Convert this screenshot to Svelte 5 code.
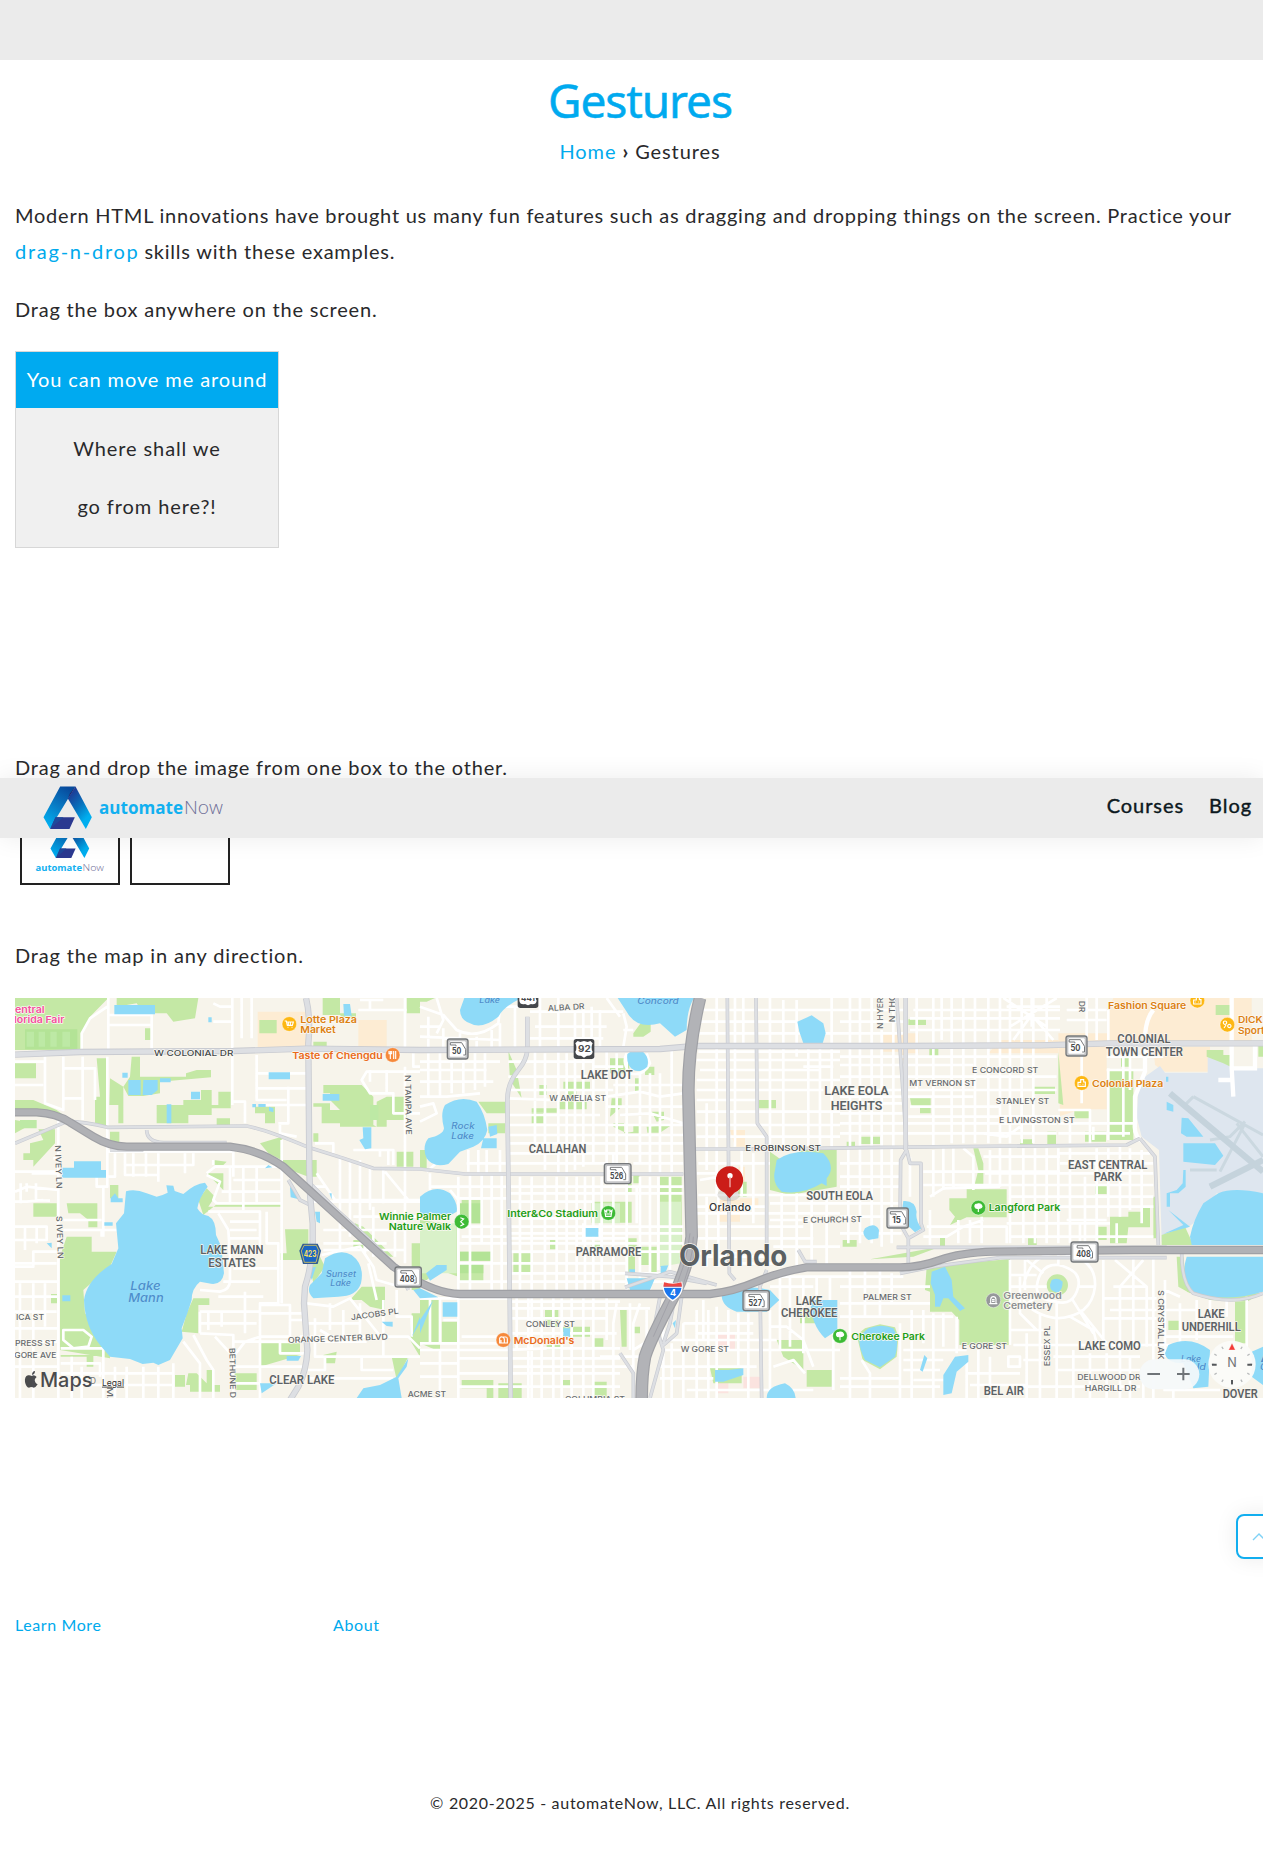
<script>
  // Map geometry is stored in three side-by-side tiles, each 1260 units wide.
  const T = [0, 1260, 2520];

  const commercial = [
    'M773 65H918V172H773ZM1075 90H1160V172H1075Z',
    'M930 420H975V470H945ZM960 625H1015V655H960ZM895 630H960V695H895ZM955 530H975V575H955Z',
    'M130 130H235V190H200V210H180V185H130ZM480 150H655V190H445ZM655 130H805V60L820 24H1235V160H800V358H725L660 378ZM940 170H1110V245H975L945 225Z'
  ];

  const pink = ['', 'M893 1028H945V1080H893ZM890 1170H925V1210H890ZM970 1160H1025V1195H970Z', ''];

  const airport = [
    '', '',
    'M915 260L960 228L975 248H1103V195H1180V235H1269V610L1130 610L1060 700L1040 715L965 755L957 480L905 440L890 380L895 300Z'
  ];

  const runways = 'M990 310L1269 545M1110 590L1269 510M1060 320L1269 435M1030 350L1060 320M1110 450L1170 440L1215 395M1140 545L1215 400M1190 400L1269 500M1050 540H1130';

  const greens = [
    'M45 24H325L270 80L245 130V180H45ZM350 50V24H595L585 85L520 95L500 70H430L410 40ZM435 115H452V150H435ZM968 24H1020V70H1068V85H1030L1020 75H968ZM778 90H830V130H778ZM940 155H980V170H940Z',
    'M45 220H108V265H45ZM395 200H420V260H558V250L590 240H633V262L480 275V310L430 318H385L370 290L390 260ZM45 330H100L170 360L290 450L240 420L165 385L45 370ZM45 390L100 400L45 430ZM290 205H318V408H285V320H300ZM330 265L370 290V400H355V345H328Z',
    'M470 345H550V330H603V300H635V345H655V305H692V355H635V375H565V400H470ZM765 350H825V400H795V370H765ZM650 385H690V405H650ZM940 350H965V400H1110L1130 410V335L1160 320H1220V390H1160V410H1020V360H990V340H940ZM970 285H1085L1120 320V405H1020V360L990 330V310H970Z',
    'M115 418H165V460L100 530V510H70V490H90V460L130 450ZM330 425H358V460H330ZM780 460L845 440V510L805 490ZM940 430H955V455H940ZM800 510L950 510V560H925L870 540ZM1190 485H1240V530H1190Z',
    'M100 640H170V680H100ZM200 640H292V712H265V690L240 670H205ZM330 585H355V625H330ZM595 630L620 595L645 620L625 650H845V643H650L610 675ZM640 510L680 515L670 525H640ZM620 550H670V600Z',
    'M200 740H275V785H350L330 830L250 900L255 970L330 1060V1105L180 1080V800ZM580 925H628V945H595V1030L545 1025L560 970ZM153 912H172V940H153ZM182 1095H280V1130H260V1100H182ZM855 718H925V810H840V790H860ZM930 830L960 800L975 830L940 880ZM1085 890H1155V960L1110 950L1085 930Z',
    'M565 1150H590L620 1180V1140H640V1185H660V1205H570V1185H558ZM780 1060H900V1095L780 1130ZM700 1150H770V1200H705ZM525 1155H555V1190H525ZM970 1095L1010 1085L1005 1120H975ZM1175 1100H1225L1190 1170ZM1220 24H1260V70H1220Z',
    'M1065 700L1090 710L1180 800H1170L1060 720ZM1060 750H1090V775H1060ZM1085 930V890L1050 930ZM1235 760H1260V900H1235ZM1235 970H1260V1100L1230 1050Z'
  ].join('');

  const greens2 = [
    'M0 24H45L20 35H0ZM640 130L665 95H692V125L670 140H640ZM265 183L290 240L305 325L270 270ZM570 205H628V250H570ZM675 230H703V255H675ZM175 335H258V370H200ZM205 400H255V430H205ZM430 275H510V300H430ZM358 285H380V315H358ZM335 355H410V368H335ZM415 335H500V358H415ZM335 370H370V400H335ZM440 300H470V335H440ZM575 325H605V350L570 380ZM695 365H732V390L710 395ZM680 410L755 405L720 428H682ZM580 400H612V430L640 425V405H660V430H620L580 410ZM645 265H660V305H645Z',
    'M1050 485L1085 510L1150 480H1250V590L1110 615L1050 600ZM1015 330H1068V355H1015ZM955 575H980V620H955ZM125 630H187V700H125ZM0 690L70 700L115 710V860L60 840L20 870H0ZM120 785H213V812H120ZM120 822H190V875H120ZM515 635H635V698H515ZM620 560H635V610H620ZM640 555H658V580H640ZM515 755H540V790H515ZM390 750H412V778H390ZM280 790H335V850H280ZM625 745H650V780H625ZM625 795H645V850H625ZM660 770H710V850H688V825H660ZM720 560H785V810L720 830Z',
    'M0 930L60 930V1085L0 1060ZM65 995H115V1060H65ZM375 960H415V1010H375ZM425 1010H510V1040H425ZM520 1045H550V1070H520ZM600 960H620V1070H605ZM640 1010H660V1030H640ZM380 1065H425V1080H380ZM125 1170H220V1224H200V1195H125ZM235 1180H305V1224H235ZM520 1175H560V1224H520ZM425 1170H450V1190H425ZM870 1135H965V1180H880ZM1070 1050H1150V1140L1090 1100ZM1160 1140H1235V1190H1160ZM1140 960H1250V1000H1140ZM0 480H20V540H0Z'
  ].join('');

  const greens3 = [
    'M205 88H258V105H205ZM268 175H295V200H268ZM210 325H272V370H240V350H215ZM655 185L670 345L655 340ZM1100 180H1150V195H1175V232L1150 220L1100 200ZM1255 165H1269V200H1255ZM580 290H645V312H580ZM60 440H120V462H60ZM540 448H578V465H540ZM622 425H648V462H622ZM735 425H798V455H735ZM703 362H750V385H703ZM805 240H880V450H805ZM843 205H870V230H843ZM20 455H45V470H20ZM765 583H800V612H765Z',
    'M400 475H415L430 520V590H405V580L415 540ZM380 598H500V682H380L330 705L345 680L328 660V625H380ZM300 740H315V770H300ZM564 745H590V765H564ZM8 750H50V770H8ZM905 652H930V712H865L860 760H810V680H865V665H905ZM775 710H800V750H775ZM940 620H948V745H940ZM965 735L1035 710L1060 765H965ZM90 808L300 770L220 800Z',
    'M260 830L500 808H510V1065H358V990L335 965H270V905L255 900ZM1010 800H1030L1040 880L1050 910L1015 890ZM985 992H1018V1020H985ZM1185 935H1220V1060H1185ZM1127 45H1175V75H1127ZM1040 905L1269 910L1220 935L1110 930ZM50 1035L75 1015L120 1003L165 1012L175 1040L170 1100L120 1138L68 1110ZM620 885A32 32 0 1 1 684 885A32 32 0 1 1 620 885Z'
  ].join('');

  const greenTiles = [greens, greens2, greens3];

  const softGreen = [
    'M75 118H232V178H75Z',
    'M0 700H110V850H0ZM720 635H783V820L720 830ZM515 640H600V700H515Z',
    ''
  ];

  const fields = 'M80 125H102V170H80ZM116 125H135V170H116ZM151 125H170V170H151ZM187 125H210V170H187ZM60 390H110V415H60ZM1110 345H1135V390H1110Z';

  const water = [
    'M378 604Q405 595 440 610L470 620Q490 615 503 608L499 586L520 587L524 603L550 612Q585 580 615 578L623 590Q596 625 592 655Q603 675 625 678Q648 690 648 735L664 770L672 850Q665 890 625 880L600 875Q575 895 575 930L562 970L545 1015L548 1045L510 1110L475 1125L460 1118L428 1122L390 1107L330 1100L300 1065Q255 1010 252 930Q260 870 335 822L355 775L348 700L372 670ZM343 45H465V73H343ZM222 514H303V540H318V563H186V533H222ZM385 270H422V315H385ZM430 270H473V300L455 315H428ZM367 248H383V263H367ZM480 265H512V277H480ZM573 305H600V328H573ZM500 343H514V400H500ZM806 247H870V268H806ZM968 312H1018V332H968ZM1030 42L1050 42L1055 77H1032ZM1088 412H1114V475L1095 478L1078 450L1090 445ZM625 82H635V97H625ZM345 610L355 625H368V637H332V625ZM313 697H338V707H313ZM187 916H211V934H187ZM945 665H960V700L950 695ZM870 590L905 630L872 622ZM988 610H995V628ZM757 342H768V352H757ZM775 342H797V351H775ZM807 350L820 355V367L807 363ZM795 535L805 525L817 532ZM140 760L155 758V775Z',
    'M975 805Q1020 775 1055 795Q1095 825 1083 880Q1070 920 1015 920L940 925Q920 905 930 885L965 850ZM925 835L948 830L935 870ZM780 1180H830L785 1210ZM860 1098H903L895 1112H860ZM1145 995H1178V1010L1160 1008ZM1070 1224L1090 1195L1140 1185L1190 1160L1225 1105L1220 1130L1195 1165L1205 1224ZM1235 1040L1260 980V1000ZM1240 900L1260 895V925Z'
  ].join('');

  const water2 = [
    'M133 24H305Q250 50 235 80Q185 120 150 100Q120 90 120 60ZM593 24H822Q800 60 800 120L765 140L720 100Q650 120 620 65ZM622 192Q640 178 665 182Q690 200 682 230Q660 250 640 240Q618 225 622 192ZM1132 95L1175 76L1210 100L1217 130L1208 160H1150L1138 125ZM75 345Q120 315 170 335Q195 370 202 420Q195 455 160 470L120 485L85 522Q40 535 20 505Q5 470 25 445Q70 435 72 415Q60 370 75 345ZM205 410L230 405L232 432L210 440ZM190 445H230V475H183ZM0 620Q45 580 90 610Q115 640 110 665Q70 690 45 675L0 675ZM497 714H535V740H497ZM18 850L50 825H80V840L30 872ZM0 895L55 922L0 925ZM68 937H112V980H68ZM628 838H645V848H628ZM620 865L705 865L690 900H630ZM722 828L745 826L735 852H722ZM905 915Q960 880 1050 900L1078 930L1040 965L950 965Q905 950 905 915ZM1070 510Q1120 475 1210 490Q1250 530 1220 565V588L1205 580Q1150 615 1085 605Q1055 580 1065 540ZM1172 930H1252V1020L1215 1045Q1170 1000 1172 930ZM885 1140L925 1140L970 1135V1155L910 1175H885ZM1040 1224Q1040 1190 1095 1180Q1125 1195 1127 1224ZM758 1000L768 990L765 1015ZM430 1015H450V1040H430ZM0 990L40 930L0 1030Z'
  ].join('');

  const water3 = [
    'M1135 610Q1180 590 1269 610V765H1055L1050 740Q1060 690 1090 640ZM1040 800H1269V905Q1150 940 1060 905Q1020 860 1040 800ZM1025 383L1045 385L1090 440L1040 440L1023 430ZM1030 460H1125L1150 497L1125 525L1030 515ZM980 335L1000 345V365L980 360ZM978 260H985V275H978ZM1030 540H1037V590L1015 610H990V650H980V610L1010 600L1028 580ZM985 660L1050 710L970 732L1030 705ZM190 633Q225 630 230 665Q225 690 245 715L225 727Q200 700 180 700ZM75 715Q105 695 117 720L115 745L85 750Q70 740 70 725ZM635 870Q655 860 668 875Q668 905 650 907Q630 905 630 885ZM275 845L315 830L335 870L340 920L375 955L360 963L325 925H310L300 950H285V915L272 880ZM85 1015Q125 1000 160 1015Q180 1050 165 1100L120 1132L75 1110Q50 1060 62 1035ZM345 1100L385 1095V1115L350 1145L335 1210L310 1215V1155ZM240 1140L253 1095L262 1105L248 1145ZM985 1065Q1050 1035 1110 1080L1105 1190L1060 1195L1030 1120Q980 1120 975 1090ZM1235 1085L1269 1070V1185L1235 1160Z'
  ].join('');

  const waterTiles = [water, water2, water3];

  const minor = [
    'M325 24V180M322 50L270 85L245 130V180M325 75H455V180M697 24V345M640 40L660 50H697M640 95H697M725 24V145M755 50V145M455 105H325M755 24V60M1075 60H1220M1080 30H1150M1110 30V60M135 200V340L190 360V200M45 285H130M248 200V390M190 235H285V330M190 325H248M322 200V520M322 200V415M45 215H135M770 195V330H860M770 250H920M770 295H920M785 345H920M865 290V400H835M697 335H735V400M840 405V430L890 440M1215 24V180M1215 230V820M1260 245H1100L1085 270L1110 310H1180V370H1260M1110 240V275M1160 240V310',
    'M175 380V1224M45 545H175M95 550H175M160 505H175M322 485V590H290V540M322 485H700V560M345 490V560H325M375 490V555H475M400 490V560M438 490V560M475 490V575M375 525H580V490M555 490V550M620 550L645 530H845M640 510V525M620 555L660 575L640 630L650 640H845M690 530V640M730 530V660M770 530V640M700 570H845M665 605H845M845 450V940M45 605L80 590L175 600M62 580V640M108 580V630L150 632M80 580V605M45 635H80L130 630M300 720H350M310 590V740M190 690H305M190 720H305V740M175 785H100V830H45M45 710H140V750H45M75 710V780M110 710V760M45 820H170M45 875H175M60 880V1224M100 880V1224M135 880V1010M45 920H175M45 965H170M45 1015H175M45 1055H175M45 1095H175M45 1130H175',
    'M625 665H780V780H690M655 670L685 720L690 800V870Q690 900 660 905L600 900M690 695H780M690 720H770M690 745H780M800 665V760H835V940H780V1224M670 875H780M700 835H835M655 920H790M600 965H780M600 1000H770M600 965V1030M625 965V1020M665 965V1010M600 1030L700 1035V1224M580 1035L620 1110L640 1140V1224M550 1055L600 1120V1224M700 1055H1100M735 905V1030M780 970H920M780 945H870V990H920M870 990V1040H780M780 1040L735 1055L700 1100L645 1040M700 1130H920M700 1180H780M840 1050V1090H920M182 1075H310V1224M182 1120H300V1160M215 1100V1224M245 1130V1224M345 1130V1224M380 1130V1224M430 1130V1224M475 1130V1224M520 1120V1224M182 1150H520M182 1185H520M190 1020H250L275 1040L265 1070L220 1075L190 1050Z',
    'M945 460H1000V490M1020 495V700M1050 510V740M1080 510V730M1110 530V660M1150 530V640M950 550L1005 630H1260M1155 545L1225 630M940 635H1260M970 720H1215M1020 700V820M970 760H1160M1095 740V790M1060 680H1260M1120 650V800M1185 660V800M940 590H980M1165 525V480H1140V500M1060 480H1180V525M965 795L1080 770L1120 830L1130 870L1200 890M970 780H1215M1105 820L1130 930M945 985V1100H1260M990 940V1020M1030 960V1050M920 940L1000 950L1050 925L1150 1050M920 1000H1080M1080 940V1050M1150 930V1100M1190 900V980H1235V1040M1260 1075L1225 1040H900M960 1020L1010 1050M920 1165H1180M1085 1100V1140H1180M975 1100V1140H920M1240 190V230H1260'
  ].join('');

  const minor2 = [
    'M50 24L70 90L50 130M0 50L70 75L110 120Q170 150 235 100L240 50H320M25 80V175M70 115V175M120 130V175M170 140V175M215 120V175M240 100V175M0 110H60M0 140L240 150M285 50V175M360 24V175M415 24V480M465 60V180M490 60V180M515 50V180M540 60V180M330 65H610M345 110H560M610 70L620 110L610 170M560 24L600 80M330 145H550M610 120H640M0 215H240M0 240H200M25 190V320M60 190V320M95 190V310M130 190V310M165 190V300M195 190V290M0 275H220M0 320H80L180 310M0 350L40 340L50 370L0 395',
    'M345 185V480M375 190V540M415 185V555M440 190V555M465 190V540M490 190V530M520 185V520M560 185V540M590 190V530M620 190V540M660 250V520M690 250V550M720 250V550M755 180V550M265 215H520M265 260H560M265 300H580M265 325L400 330L560 320L660 305L720 320L790 310M265 375H540M265 405H790M265 435H790M265 460H790M265 490H790M265 520H560M620 190Q605 220 630 250Q670 260 690 220L680 190M520 230H610M580 285H790M560 350H790M600 375L690 370L790 400M640 520H790M580 490V550M145 480V545M175 480V550M200 480V550M240 480V545M60 470H145M140 520H265M80 470L60 510L20 545',
    'M115 560V1224M150 555V900M185 555V760M215 555V900M245 555V900M30 550V600M30 590H260M115 625H260M90 600L115 630M300 560V900M335 560V1224M375 560V900M410 560V900M440 560V900M470 560V900M495 560V900M520 560V900M545 560V900M580 560V900M620 560V900M660 560V900M690 560V900M715 560V840M750 560V850M115 710H790M270 590H790M270 610H790M270 635H520M300 685H510M270 730H790M270 745H620M115 760H790M270 785H790M115 820H620M270 850H790M115 875H790M125 740H260M650 590V700M490 700V760M540 700V750',
    'M0 925H270M30 925V1060M60 925V1060M0 1060H270M70 990H115V1060M125 1040H260M0 1080H260L380 1075H600M115 1105H600M115 1150H600M115 1190H600M60 1080V1224M0 1120H115M0 1160H115M290 920V1075M325 920V1224M365 920V1224M400 920V1224M425 920V1224M455 920V1224M490 920V1224M520 920V1224M560 920V1050M590 940L580 1000V1224M630 940V1080M660 940L640 1000V1224M680 960V1050M270 935H600M270 955H690M270 985H560M270 1030H590M540 1100H680M280 1130H640M640 1080L720 1030M730 980V1224M755 1060V1224M790 1000V1224M830 960V1224M865 960V1224M890 950V1224M925 960V1080M955 970V1130M985 970V1224M730 1080H1260M720 1130H1010M720 1165H880M800 1200H1180M740 1050H1070M790 1000H1000M850 930V1050M830 1030H1000',
    'M835 60H1260M835 95H1130M1090 30V470M1130 30V200M1165 175V470M1200 175V470M1235 24V470M1050 24V470M970 24V160M890 24V470M945 24V470M835 130H1260M835 185H1260M830 210H1260M840 240H1200M830 270H1260M830 300H1210M830 330H1015M830 365H1260M830 405H1260M830 440H1260M1150 230H1240M860 340V540M890 470V620M835 520H1050M830 550H890L900 560L840 570M835 615H1260M830 650H1040M830 670H1260M830 710H1150M830 745H1180M860 620V830M895 620V830M965 480V620M1000 490V700M1085 610V830M1130 610V830M1175 620V830M1220 600V830M1050 640H1260M1050 690H1200M1060 770H1260M840 790H960M950 820H1080M860 800H1040M1040 860H1260M1050 890H1180M1080 860V1080M1110 860V1070M1150 860V1090M1190 860V960M1230 860V950M1050 1010H1100L1150 1050L1180 1130M1060 1130L1120 1110L1155 1150M1240 1000V1200M1050 960V1224'
  ].join('');

  const minor3 = [
    'M0 60H190M0 95H190M0 130H190M30 24V470M60 24V470M95 24V470M125 120V470M160 24V470M230 24V300M280 24V470M305 24V150M335 24V460M370 24V460M405 24V460M445 24V460M480 24V460M510 24V460M545 24V460M580 24V460M620 24V160M0 200H650M0 225H400M0 260H650M0 300H650M0 340H200M0 370H200M0 400H650M0 430H650M210 350H480M205 380H660M220 60H660M210 85H660M210 120H660M500 50H660M490 24L620 110M650 24L510 110M575 24V110M575 75L520 150M575 75L640 150M740 24V160M770 24V150M805 60V160M680 60H800M680 90H800M850 200V440M870 175V300M800 200H970M800 240H915M850 175V230M805 235V450M725 190V340M690 390V460M655 360H750V460M655 400H880M655 430H870M760 410V450M0 320H400M430 430L500 440L540 410',
    'M25 475V760M60 475V760M95 475V760M125 475V770M155 475V760M0 520H180M0 560H180M0 590H180M0 640H180M0 680H130M0 730H185M210 500V620M280 480V620M310 475V600M340 475V590M370 475L400 500V600M450 480V590M480 475V590M510 475V760M550 475V760M585 475V760M620 475V760M655 475V760M690 475V760M735 560V760M770 475V760M805 475V680M840 470V680M870 475V660M905 480V700M250 545H660M250 585H940M270 620L310 595L480 590M510 620H940M510 650H940M430 690L370 710L320 740H250M260 710H500V760M355 690V760M390 690V760M425 680V760M500 700H810M510 740H940M680 690H800M430 500H660M435 550H940M660 520H940M655 490H930M270 660V765M830 700V760M720 700V760',
    'M0 860H190M0 890H270M30 840V990M75 830V980M120 820V980M155 850V940M0 940H270M0 980H340M30 990V1224M65 1110L90 1150V1224M180 1000V1224M215 960V1224M250 960V1060M280 970V1060M310 970V1070M0 1165H180M0 1190H300M190 1080H380M190 1110H310M190 1140H300M220 1170H320M280 1060V1224M350 980V1090M510 810V1065M555 810V900M510 855H590M510 890H620M590 890Q600 820 655 825Q725 840 715 890Q700 950 650 935Q590 930 590 890ZM550 890Q570 790 655 790Q770 800 765 890Q755 980 650 985Q580 975 550 930M655 790V825M715 890H765M650 935V985M695 925L760 1030M610 850L560 810M590 920L535 960M540 860V970L590 1020M650 985V1224M600 970V1224M560 1030V1224M510 1020H620M520 1065H1010M690 980L760 1020L775 1080M720 960L800 1060M790 810V1060M825 810L920 890V1070M910 810L840 890V1060M880 800V1070M820 890H920M790 925H950M810 960H950M790 985H950M940 800V1224M975 870V1100M975 900L1020 920M970 960H1080M1020 940V1060M1070 930V1050M1110 930V960M1160 930V980M1220 920V1100M975 1040H1180M640 1100H900M650 1140H900M550 1190H900M550 1110H610M700 1080V1224M750 1090V1224M800 1090V1224M840 1080V1224M870 1100V1224M380 1100V1224M415 1080V1224M450 1100V1224M505 1100V1130H540V1100ZM380 1150H540M390 1185H560M910 1140V1224M1000 1190V1224M970 1200H1140M1180 1060V1110'
  ].join('');

  const minorTiles = [minor, minor2, minor3];

  const wide = [
    'M918 24Q932 80 925 160L928 540Q928 620 938 700V760Q935 830 915 890L912 940L922 1080Q920 1140 895 1190L870 1230',
    'M322 80V180Q320 210 295 240Q262 280 262 330L267 700L272 1224',
    'M197 24V480'
  ];

  const wideGlobal = [
    'M45 194L240 186L700 183L920 176L1260 180L1980 177L2085 168L2720 168L3120 166L3330 160H3789'
  ];

  const medium = [
    'M45 460L200 395Q260 395 322 412L740 408Q800 420 920 470Q1020 500 1120 535L1260 537L1395 552L2050 552',
    'M2182 24L2188 850L2205 870M2268 24L2272 400L2300 440V830M2085 477H2268M2240 478L2640 472L3380 465L3420 445M2690 24L2720 470M2300 840L2280 890L2285 1224M3420 445L3465 500L3475 765M2720 480L2702 510L2700 700L2725 745V830M2720 480L2730 520H2763V700L2770 720L2725 745M2690 772H3500M2700 850L2800 830L3000 803H3500M3545 790Q3545 880 3580 910Q3700 950 3789 910',
    'M2395 780L2415 815H2450M1875 892L2010 845L2150 885M1875 850L2010 860L2120 880M1860 1090L1900 1150V1224M1980 920L1965 1000L1990 1080L1950 1224M2030 890L2010 1000L1990 1060M2045 920L2030 1030L1985 1070M440 420Q440 455 490 458H680M330 480H430M865 570L900 630L940 650M930 580L1000 650L1110 750L1190 830L1225 900'
  ];

  const highway = 'M45 367H110Q170 370 210 397L280 440Q330 470 380 470H690Q780 480 850 530L1180 830Q1300 912 1380 912H2130Q2200 905 2270 875T2420 832H2700Q2760 832 2820 810T2980 785L3400 780H3789';
  const interstate = 'M2100 24Q2065 170 2065 300L2075 740Q2065 830 2020 920Q1950 1050 1935 1100Q1925 1150 1925 1230';

  // x/y are the start (or middle) of the baseline, w the drawn width
  const districts = [
    [601, 791, 189, 'LAKE MANN'], [625, 830, 142, 'ESTATES'], [808, 1182, 195, 'CLEAR LAKE'],
    [1742, 266, 156, 'LAKE DOT'], [1586, 490, 173, 'CALLAHAN'], [1727, 797, 197, 'PARRAMORE'],
    [2473, 315, 193, 'LAKE EOLA'], [2492, 359, 155, 'HEIGHTS'], [2419, 631, 200, 'SOUTH EOLA'],
    [2387, 944, 80, 'LAKE'], [2343, 982, 169, 'CHEROKEE'],
    [3352, 158, 160, 'COLONIAL'], [3317, 197, 232, 'TOWN CENTER'], [3204, 536, 238, 'EAST CENTRAL'],
    [3281, 574, 85, 'PARK'], [3593, 984, 81, 'LAKE'], [3545, 1022, 177, 'UNDERHILL'],
    [3235, 1081, 187, 'LAKE COMO'], [2951, 1215, 121, 'BEL AIR'], [3668, 1224, 105, 'DOVER']
  ];

  // last value is the rotation in degrees
  const streets = [
    [462, 197, 238, 'W COLONIAL DR', 0, 'dark'], [1215, 255, 180, 'N TAMPA AVE', 89],
    [165, 466, 130, 'N IVEY LN', 88], [169, 678, 128, 'S IVEY LN', 88], [688, 1074, 150, 'BETHUNE D', 89],
    [48, 989, 84, 'ICA ST', 0], [45, 1067, 123, 'PRESS ST', 0], [43, 1105, 126, 'GORE AVE', 0],
    [864, 1059, 300, 'ORANGE CENTER BLVD', -2], [1054, 991, 144, 'JACOBS PL', -8], [1223, 1221, 115, 'ACME ST', 0],
    [1644, 63, 110, 'ALBA DR', -3], [1648, 332, 170, 'W AMELIA ST', 0], [1577, 1011, 148, 'CONLEY ST', 0],
    [1695, 1236, 180, 'COLUMBIA ST', 0], [2042, 1087, 145, 'W GORE ST', 0],
    [2236, 483, 227, 'E ROBINSON ST', 0, 'dark'], [2409, 699, 177, 'E CHURCH ST', -1],
    [2648, 117, 94, 'N HYER', -90], [2685, 97, 84, 'N THO', -90], [3237, 32, 35, 'DR', 90],
    [2916, 250, 199, 'E CONCORD ST', 0], [2728, 289, 199, 'MT VERNON ST', 0], [2987, 343, 161, 'STANLEY ST', 0],
    [2997, 398, 227, 'E LIVINGSTON ST', 0], [2589, 931, 146, 'PALMER ST', 0], [2885, 1077, 136, 'E GORE ST', 0],
    [3149, 1129, 122, 'ESSEX PL', -90], [3474, 900, 208, 'S CRYSTAL LAK', 90],
    [3232, 1169, 190, 'DELLWOOD DR', 0], [3254, 1204, 155, 'HARGILL DR', 0], [322, 1190, 55, 'MA', 90]
  ];

  const places = [
    [45, 68, 89, 'entral', '#f4509c'], [42, 99, 151, 'lorida Fair', '#f4509c'],
    [901, 98, 170, 'Lotte Plaza', '#dd8010'], [901, 128, 106, 'Market', '#dd8010'],
    [877, 206, 271, 'Taste of Chengdu', '#ea6a1a'],
    [1137, 690, 216, 'Winnie Palmer', '#1f9e18'], [1166, 720, 187, 'Nature Walk', '#1f9e18'],
    [1522, 680, 272, 'Inter&Co Stadium', '#1f9e18'], [1541, 1061, 182, "McDonald's", '#ea6a1a'],
    [3324, 56, 235, 'Fashion Square', '#dd8010'], [3276, 290, 214, 'Colonial Plaza', '#dd8010'],
    [3714, 100, 84, "DICK'", '#dd8010'], [3714, 131, 80, 'Sport', '#dd8010'],
    [2966, 663, 215, 'Langford Park', '#1f9e18'], [2554, 1050, 221, 'Cherokee Park', '#1f9e18'],
    [3010, 926, 175, 'Greenwood', '#8c8e90'], [3010, 957, 148, 'Cemetery', '#8c8e90']
  ];

  const lakes = [
    [391, 899, 91, 'Lake', 36], [385, 936, 106, 'Mann', 36], [978, 861, 90, 'Sunset', 25], [991, 887, 62, 'Lake', 25],
    [1438, 40, 62, 'Lake', 25], [1912, 41, 124, 'Concord', 26], [1354, 418, 70, 'Rock', 27], [1354, 447, 68, 'Lake', 27],
    [3543, 1116, 60, 'Lake', 25], [3590, 1140, 28, 'ld', 25], [3780, 1116, 40, 'L', 25], [3780, 1140, 40, 'Co', 25]
  ];

  const pins = [
    [868, 102, '#fdb713', 'cart'], [1178, 195, '#f6893b', 'fork'], [1385, 695, '#3dbb35', 'walk'],
    [1825, 669, '#3dbb35', 'arena'], [1510, 1050, '#f6893b', 'bag'], [3592, 32, '#fdb713', 'shop'],
    [3245, 279, '#fdb713', 'shop'], [3682, 104, '#fdb713', 'ball'], [2935, 653, '#3dbb35', 'tree'],
    [2520, 1038, '#3dbb35', 'tree'], [2980, 931, '#96989a', 'grave']
  ];

  const glyphs = {
    cart: 'M-14-9H-9L-6 4H9L12-6H-8M-5 10H-3M7 10H9M-3-5V3M3-5V3',
    fork: 'M-7-12V12M-11-12V-4H-3V-12M3-12V12M9-12V12',
    walk: 'M-4-12L6-8L-3 0L6 8L-4 13',
    arena: 'M-11-8L-8 10H8L11-8L5-3V-9H-5V-3ZM-8 3H8',
    bag: 'M-11 9V-5Q-9-10-4-9H8Q12-9 12-3V9ZM3 9V-3Q1-9-4-9M-7 9V0',
    shop: 'M-11 10V-2H-3V-10H6V-3H11V10ZM-6 4H-4M3 4H5',
    ball: 'M-12-6A5 5 0 1 0-2-6A5 5 0 1 0-12-6M1 4A5 5 0 1 0 11 4A5 5 0 1 0 1 4M-10 10L-4 1',
    tree: 'M0 13V1M-10-2Q-12-11-3-11Q8-14 11-4Q10 2 0 2Q-9 3-10-2Z',
    grave: 'M-8 9V-3Q-7-11 0-11Q7-11 8-3V9M-12 10H12M-4-2H4M-4 3H4'
  };

  const shields = [
    [1183, 829, 83, '408', 44], [1340, 145, 66, '50', 28], [1811, 519, 84, '526', 40], [2227, 900, 83, '527', 40],
    [2659, 652, 68, '15', 26], [3196, 136, 67, '50', 30], [3211, 754, 85, '408', 44]
  ];
</script>

{#snippet mark(id)}
  <defs>
    <linearGradient id="{id}l" x1=".7" y1="0" x2=".2" y2="1">
      <stop offset="0" stop-color="#074a9c" /><stop offset=".45" stop-color="#0878c2" /><stop offset="1" stop-color="#00b4f5" />
    </linearGradient>
    <linearGradient id="{id}r" x1=".2" y1="0" x2=".8" y2="1">
      <stop offset="0" stop-color="#21308e" /><stop offset=".45" stop-color="#0870bb" /><stop offset=".8" stop-color="#00aeef" />
    </linearGradient>
  </defs>
  <path d="M50 0H96L40 92L20 127L0 92Z" fill="url(#{id}l)" />
  <path d="M96 0L145 92L127 127L73 36Z" fill="url(#{id}r)" />
  <path d="M96 0L73 36L80 20Z" fill="#262262" />
  <path d="M36 92H94L78 127H20Z" fill="#2b3990" />
  <path d="M36 92L20 127L60 92Z" fill="#20489a" />
{/snippet}

<div class="page">
  <div class="topbar"></div>

  <main>
    <h1>Gestures</h1>
    <nav class="crumbs"><a href="#home">Home</a> <b>›</b> Gestures</nav>

    <p class="intro">
      Modern HTML innovations have brought us many fun features such as dragging and dropping things on the screen. Practice your<br />
      <a class="roomy" href="#drag">drag-n-drop</a> skills with these examples.
    </p>
    <p class="boxhint">Drag the box anywhere on the screen.</p>

    <section class="movable">
      <header>You can move me around</header>
      <p>Where shall we</p>
      <p>go from here?!</p>
    </section>

    <p class="drophint">Drag and drop the image from one box to the other.</p>
    <div class="drops">
      <div class="drop">
        <svg viewBox="0 0 96 98" width="96" height="98">
          <g transform="translate(28.5 37) scale(.267)">{@render mark('s')}</g>
          <text x="13.5" y="84" class="word" font-size="9.6" textLength="46.5" lengthAdjust="spacingAndGlyphs">automate</text>
          <text x="60.5" y="84" class="now" font-size="9.6" textLength="21.5" lengthAdjust="spacingAndGlyphs">Now</text>
        </svg>
      </div>
      <div class="drop"></div>
    </div>

    <p class="maphint">Drag the map in any direction.</p>

    <svg class="map" viewBox="45 24 3744 1200" width="1248" height="400">
      <rect x="45" y="24" width="3744" height="1200" fill="#f7f4eb" />
      {#each T as dx, i}
        <g transform="translate({dx} 0)">
          <path d={commercial[i]} fill="#fdecd3" />
          <path d={pink[i]} fill="#fbe3df" />
          <path d={airport[i]} fill="#dee6ef" />
          <path d={greenTiles[i]} fill="#c4e8a5" />
          <path d={softGreen[i]} fill={i ? '#d9f1c9' : '#b3e396'} />
        </g>
      {/each}
      <path d={fields} fill="#bde9a5" />
      <path d="M1380 640H1445V700H1380ZM1380 785H1473V812H1380ZM1380 822H1450V850H1380Z" fill="#b3e396" />
      <path d={runways} transform="translate(2520 0)" fill="none" stroke="#cbd8e0" stroke-width="9" />
      <path d="M3510 310L3789 545M3630 590L3789 510" fill="none" stroke="#c5d3dc" stroke-width="19" />
      {#each T as dx, i}
        <g transform="translate({dx} 0)">
          <path d={minorTiles[i]} class="minor" />
          <path d={waterTiles[i]} fill="#8edaf8" />
        </g>
      {/each}
      <path d="M3460 60Q3435 90 3435 150V245L3405 320V400Q3400 440 3430 455M3695 24V235L3700 320M3655 270H3700M3700 235H3765V165" fill="none" stroke="#fff" stroke-width="13" />

      {#each medium as d}<path {d} class="road edge" />{/each}
      {#each medium as d}<path {d} class="road fill" />{/each}
      {#each T as dx, i}
        <g transform="translate({dx} 0)">
          <path d={wide[i]} class="wide edge" class:slim={i > 0} /><path d={wide[i]} class="wide fill" class:slim={i > 0} />
        </g>
      {/each}
      {#each wideGlobal as d}<path {d} class="wide edge" /><path {d} class="wide fill" />{/each}

      <path d={highway} class="hwy edge" /><path d={highway} class="hwy fill" />
      <path d={interstate} class="state edge" /><path d={interstate} class="state fill" />
      <path d="M2070 730Q2060 830 2005 940L1960 1040M2080 740Q2080 820 2030 930" fill="none" stroke="#a2a2a9" stroke-width="3" />

      {#each lakes as [x, y, w, t, size]}
        <text {x} {y} class="lake" font-size={size} textLength={w} lengthAdjust="spacingAndGlyphs">{t}</text>
      {/each}
      {#each streets as [x, y, w, t, r, tone]}
        <text {x} {y} class="street" class:dark={tone} textLength={w} lengthAdjust="spacingAndGlyphs" transform="rotate({r} {x} {y})">{t}</text>
      {/each}
      {#each districts as [x, y, w, t]}
        <text {x} {y} class="district" textLength={w} lengthAdjust="spacingAndGlyphs">{t}</text>
      {/each}
      {#each places as [x, y, w, t, fill]}
        <text {x} {y} {fill} class="place" textLength={w} lengthAdjust="spacingAndGlyphs">{t}</text>
      {/each}

      {#each pins as [x, y, color, icon]}
        <g transform="translate({x} {y})">
          <circle r="22" fill={color} stroke="#fff" stroke-opacity=".6" stroke-width="2" />
          <path d={glyphs[icon]} fill={icon === 'tree' ? '#fff' : 'none'} stroke="#fff" stroke-width="3.4" />
        </g>
      {/each}

      {#each shields as [x, y, w, t, tw]}
        <g transform="translate({x} {y})">
          <rect x="2" y="2" width={w - 4} height="60" rx="7" fill="#c4c5c7" stroke="#76797c" stroke-width="4" />
          <rect x="9" y="9" width={w - 18} height="46" rx="3" fill="#fff" />
          <path d="M{w / 2 - 22} 13H{w / 2 + 12}L{w / 2 + 24} 33V50H{w / 2 + 17}M{w / 2 - 22} 13V20H{w / 2 - 5}V24" fill="none" stroke="#77797b" stroke-width="3" />
          <text x={w / 2 - 3} y="47" class="num" textLength={tw} lengthAdjust="spacingAndGlyphs">{t}</text>
        </g>
      {/each}

      <g transform="translate(898 758)">
        <path d="M10 3H55L65 24L55 64H11L0 24Z" fill="#315b95" /><path d="M14 8H51L59 25L50 59H15L6 25Z" fill="#1c66c2" stroke="#dbc95e" stroke-width="2.5" />
        <text x="32" y="43" class="num" fill="#f7df62" textLength="38" lengthAdjust="spacingAndGlyphs">423</text>
      </g>
      <g transform="translate(1719 145)">
        <rect x="2" y="2" width="62" height="60" rx="8" fill="#45474a" />
        <path d="M14 8L22 11L33 8L44 11L52 8L59 15Q52 28 59 40Q57 53 42 52L33 58L24 52Q9 53 7 40Q14 28 7 15Z" fill="#fff" />
        <text x="34" y="42" class="num" textLength="38" lengthAdjust="spacingAndGlyphs">92</text>
      </g>
      <g transform="translate(1551 -8)">
        <rect x="2" y="2" width="62" height="60" rx="8" fill="#45474a" />
        <path d="M7 15H59Q52 28 59 40Q57 53 42 50L33 54L24 50Q9 53 7 40Z" fill="#fff" />
        <text x="33" y="42" class="num" textLength="42" lengthAdjust="spacingAndGlyphs">441</text>
      </g>
      <g transform="translate(1987 875)">
        <path d="M4 2Q31 10 58 2Q66 36 31 57Q-4 36 4 2Z" fill="#1a76ed" stroke="#fff" stroke-width="4" />
        <path d="M5 2Q31 10 57 2L59 15H3Z" fill="#ef4743" /><path d="M3 17H59" stroke="#fff" stroke-width="3" />
        <text x="32" y="43" class="num" fill="#fff">4</text>
      </g>

      <text x="2037" y="829" class="city" textLength="325" lengthAdjust="spacingAndGlyphs">Orlando</text>
      <ellipse cx="2186" cy="614" rx="34" ry="20" fill="#000" opacity=".1" />
      <path d="M2188 625L2174 608A41 41 0 1 1 2203 608Z" fill="#cb1d18" />
      <circle cx="2190" cy="557" r="8" fill="#fff" /><path d="M2190 560V592" stroke="#f1b0ac" stroke-width="4" />
      <text x="2127" y="664" class="pinlabel" textLength="126">Orlando</text>

      <g opacity=".82" fill="#25262a">
        <path d="M96 1155Q96 1144 105 1143Q105 1153 96 1155ZM75 1176Q73 1159 84 1156Q91 1155 95 1158Q103 1153 110 1161Q101 1168 106 1177Q108 1181 113 1183Q105 1196 98 1192Q93 1189 87 1193Q78 1192 75 1176Z" />
        <text x="120" y="1192" class="brand" textLength="157" lengthAdjust="spacingAndGlyphs">Maps</text>
      </g>
      <text x="270" y="1181" font-size="25" fill="#777" class="small">D</text>
      <text x="306" y="1187" class="small legal" textLength="66" lengthAdjust="spacingAndGlyphs">Legal</text>

      <rect x="3418" y="1108" width="180" height="90" rx="45" fill="#f5f8fa" fill-opacity=".92" />
      <path d="M3442 1152H3480M3531 1152H3569M3550 1133V1171" stroke="#6f7478" stroke-width="6" />
      <circle cx="3696" cy="1123" r="71" fill="#fbfbf9" fill-opacity=".95" />
      <g stroke="#b8babb" stroke-width="4">
        {#each Array(12) as _, i}<path d="M3696 1062V1070" transform="rotate({i * 30} 3696 1123)" />{/each}
      </g>
      <path d="M3636 1124H3650M3742 1124H3756M3696 1170V1183" stroke="#55585b" stroke-width="6" />
      <path d="M3696 1060L3706 1080H3686Z" fill="#f33a37" stroke="#fff" />
      <text x="3696" y="1132" text-anchor="middle" font-size="38" fill="#707376" class="small">N</text>
    </svg>

    <footer>
      <div class="links"><a href="#learn">Learn More</a><a href="#about">About</a></div>
      <p class="copy">© 2020-2025 - automateNow, LLC. All rights reserved.</p>
    </footer>
  </main>

  <div class="sticky">
    <svg class="logo" viewBox="0 0 190 60" width="190" height="60">
      <g transform="translate(3.5 8.6) scale(.3333)">{@render mark('b')}</g>
      <text x="59" y="35.5" class="word" font-size="17.5" textLength="84" lengthAdjust="spacingAndGlyphs">automate</text>
      <text x="144" y="35.5" class="now" font-size="17.5" textLength="39" lengthAdjust="spacingAndGlyphs">Now</text>
    </svg>
    <nav><a href="#courses">Courses</a><a href="#blog">Blog</a></nav>
  </div>

  <button class="totop" aria-label="Back to top">
    <svg viewBox="0 0 14 8" width="14" height="8"><path d="M1 7L7 1L13 7" fill="none" stroke="#7fd2f6" stroke-width="1.4" /></svg>
  </button>
</div>

<style>
  :global(body) { margin: 0; background: #fff; }
  .page {
    position: relative; width: 1263px; height: 1857px; overflow: hidden;
    font-family: Lato, sans-serif; font-weight: 400; font-size: 20px; line-height: 36px;
    letter-spacing: .76px; color: #29292b;
  }
  a { color: #00aaed; text-decoration: none; }
  p { margin: 0; white-space: nowrap; }
  .topbar { height: 60px; background: #ebebeb; }
  main { width: 1250px; padding: 0 15px; }
  h1 {
    margin: 12px 0 0; text-align: center; color: #00aaef;
    font: 400 46px/56px "Noto Sans", sans-serif; letter-spacing: -1.1px;
    -webkit-text-stroke: .5px #00aaef;
  }
  .crumbs { text-align: center; height: 36px; margin-top: 5px; letter-spacing: .9px; }
  .intro { margin-top: 28px; }
  .roomy { letter-spacing: 1.75px; margin-right: -1px; }
  .boxhint { margin-top: 22px; letter-spacing: .8px; }
  .movable {
    box-sizing: border-box; width: 264px; height: 197px; margin-top: 24px; letter-spacing: .9px;
    border: 1px solid #d7d7d7; background: #f0f0f0; text-align: center;
  }
  .movable header { height: 56px; line-height: 54px; color: #fff; background: #00aaf0; white-space: nowrap; }
  .movable p { margin-top: 22px; }
  .drophint { margin-top: 201px; letter-spacing: .8px; }
  .drops { display: flex; gap: 10px; margin: 0 0 0 5px; height: 100px; }
  .drop { box-sizing: border-box; width: 100px; height: 100px; border: 2px solid #222; overflow: hidden; }
  .drop svg { display: block; }
  .maphint { margin-top: 52px; letter-spacing: .85px; }
  .map { display: block; margin-top: 25px; }
  .word { font-family: "Open Sans", sans-serif; font-weight: 700; fill: #12b0f0; letter-spacing: 0; }
  .now { font-family: "Open Sans", sans-serif; font-weight: 300; fill: #6f6f98; letter-spacing: 0; }

  .map text { font-family: Inter, sans-serif; letter-spacing: 0; paint-order: stroke; stroke: #fbf9f3; stroke-width: 4px; stroke-linejoin: round; }
  .map .district { font-family: Roboto, sans-serif; font-weight: 600; font-size: 39px; fill: #5d6265; }
  .map .street { font-size: 24px; font-weight: 500; fill: #666a6d; }
  .map .dark { fill: #46494c; }
  .map .place { font-size: 28px; font-weight: 600; }
  .map .lake { fill: #4c8fcd; font-style: italic; font-weight: 500; stroke: #a4def6; stroke-width: 2px; }
  .map .num { font-size: 27px; font-weight: 700; text-anchor: middle; stroke: none; }
  .map .num:not([fill]) { fill: #4a4c4e; }
  .map .city { font-size: 88px; font-weight: 700; fill: #5b6062; }
  .map .pinlabel { font-size: 32px; font-weight: 500; fill: #2f3133; }
  .map .brand { font-size: 60px; font-weight: 500; stroke: none; }
  .map .small { stroke: none; }
  .map .legal { font-size: 26px; fill: #333; text-decoration: underline; }
  .minor { fill: none; stroke: #fff; stroke-width: 8; stroke-linejoin: round; }
  .road, .wide, .hwy, .state { fill: none; stroke-linejoin: round; }
  .edge { stroke: #c9cbd1; }
  .fill { stroke: #dddfe3; }
  .road.edge { stroke-width: 11; }
  .road.fill { stroke-width: 7; }
  .wide.edge { stroke-width: 19; }
  .wide.fill { stroke-width: 14; }
  .wide.edge.slim { stroke-width: 14; }
  .wide.fill.slim { stroke-width: 10; }
  .hwy.edge { stroke: #9fa0a5; stroke-width: 25; }
  .hwy.fill { stroke: #b0b1b5; stroke-width: 18; }
  .state.edge { stroke: #9fa0a5; stroke-width: 38; }
  .state.fill { stroke: #b2b3b7; stroke-width: 31; }

  .links { display: grid; grid-template-columns: 318px 318px; margin-top: 209px; font-size: 16px; line-height: 36px; letter-spacing: .6px; }
  .copy { margin-top: 142px; text-align: center; font-size: 16px; letter-spacing: .7px; }
  .sticky {
    position: absolute; top: 778px; left: 0; width: 100%; height: 60px; box-sizing: border-box;
    display: flex; justify-content: space-between; padding: 0 11px 0 40px;
    background: #ebebeb; box-shadow: 0 0 26px rgba(0, 0, 0, .08);
  }
  .sticky nav { display: flex; gap: 25px; line-height: 54px; letter-spacing: .95px; }
  .sticky nav a { color: #0c1820; -webkit-text-stroke: .4px #0c1820; }
  .totop {
    position: absolute; left: 1236px; top: 1514px; width: 46px; height: 45px; box-sizing: border-box; padding: 0;
    display: grid; place-items: center; background: #fff; border: 2.5px solid #12aeef; border-radius: 8px;
    box-shadow: 0 0 22px rgba(0, 0, 0, .08);
  }
</style>
